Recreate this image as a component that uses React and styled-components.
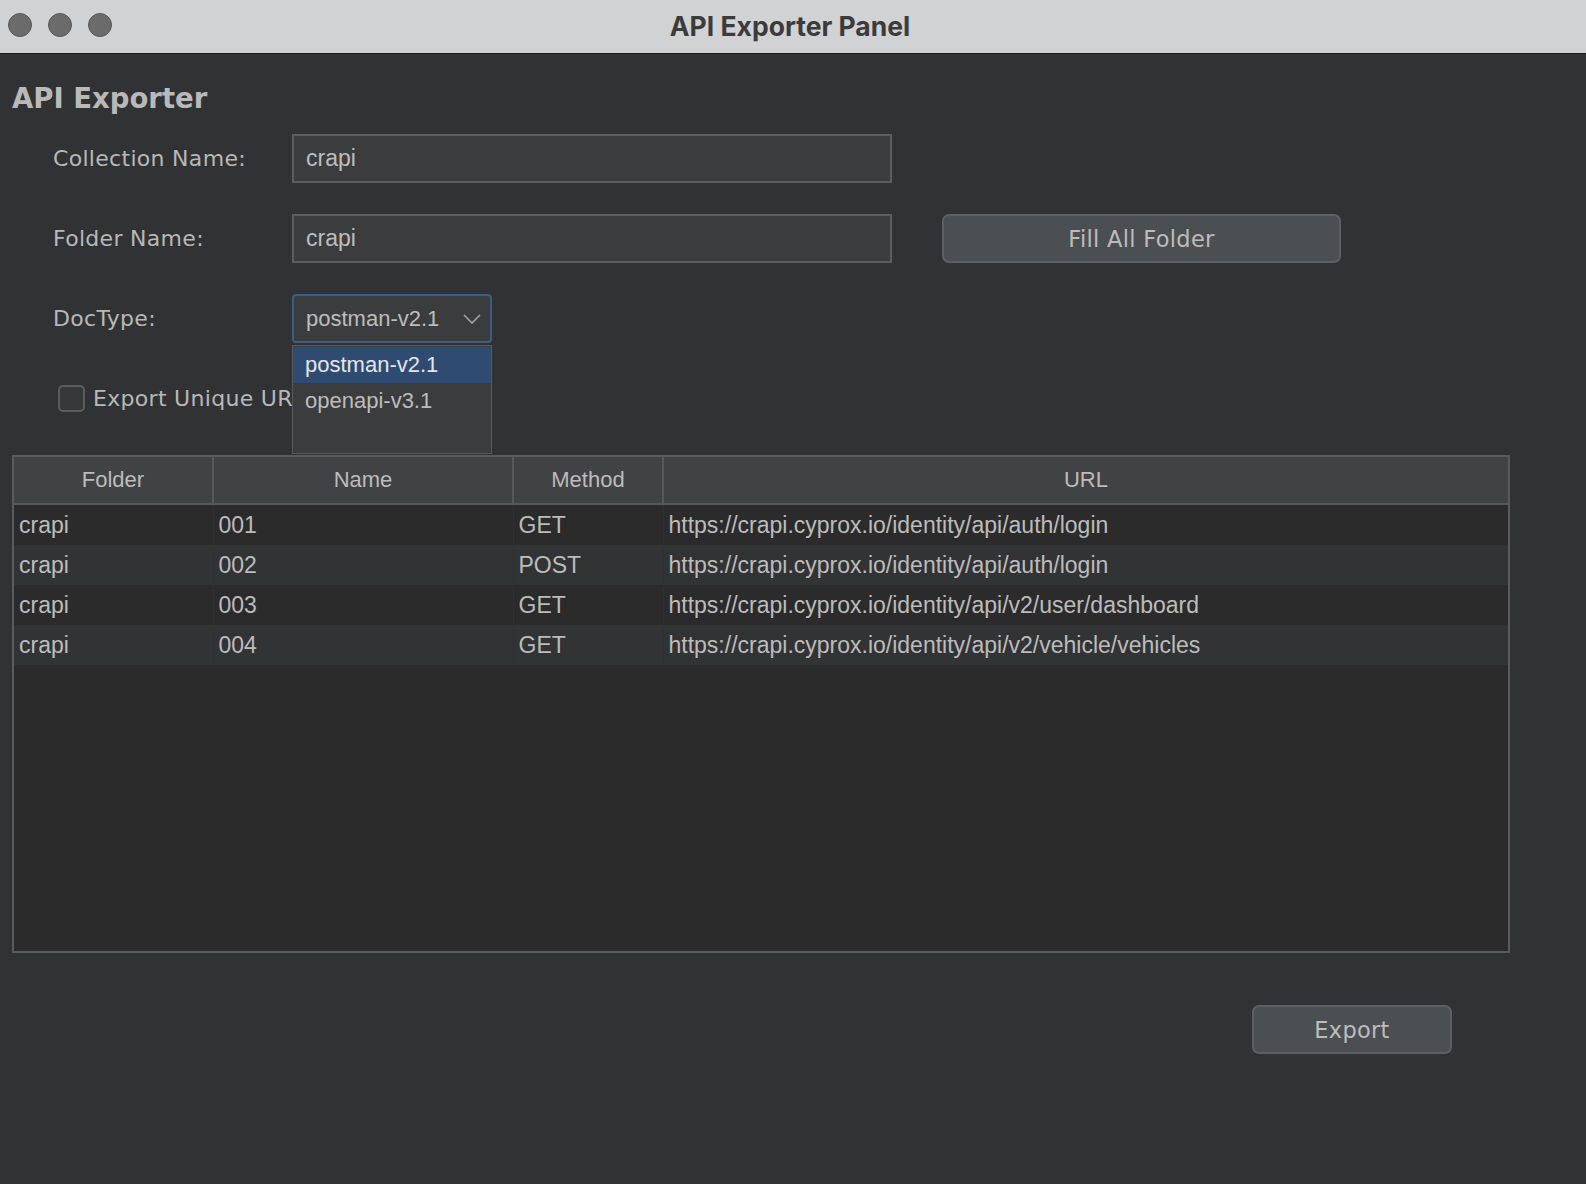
import React from 'react';
import styled, {createGlobalStyle} from 'styled-components';

const GlobalStyle = createGlobalStyle`
  html, body {
    margin: 0;
    padding: 0;
    background: #313234;
  }
  body {
    font-family: "DejaVu Sans", sans-serif;
  }
`;

const rows = [
    {folder: 'crapi', name: '001', method: 'GET', url: 'https://crapi.cyprox.io/identity/api/auth/login'},
    {folder: 'crapi', name: '002', method: 'POST', url: 'https://crapi.cyprox.io/identity/api/auth/login'},
    {folder: 'crapi', name: '003', method: 'GET', url: 'https://crapi.cyprox.io/identity/api/v2/user/dashboard'},
    {folder: 'crapi', name: '004', method: 'GET', url: 'https://crapi.cyprox.io/identity/api/v2/vehicle/vehicles'},
];

const columns = [
    {key: 'folder', label: 'Folder', width: 199},
    {key: 'name', label: 'Name', width: 300},
    {key: 'method', label: 'Method', width: 150},
    {key: 'url', label: 'URL'},
];

function App() {
    return (
        <Window>
            <GlobalStyle/>
            <TitleBar>
                <Lights>
                    <Light/>
                    <Light/>
                    <Light/>
                </Lights>
                <WindowTitle>API Exporter Panel</WindowTitle>
            </TitleBar>
            <Content>
                <Heading>API Exporter</Heading>
                <Form>
                    <Label>Collection Name:</Label>
                    <TextField>crapi</TextField>
                    <Spacer/>
                    <Spacer/>

                    <Label>Folder Name:</Label>
                    <TextField>crapi</TextField>
                    <Spacer/>
                    <Button>Fill All Folder</Button>

                    <Label>DocType:</Label>
                    <SelectWrap>
                        <Select>
                            <span>postman-v2.1</span>
                            <svg width="18" height="10" viewBox="0 0 18 10" fill="none">
                                <path d="M1 1l8 8 8-8" stroke="#a3a3a3" strokeWidth="1.6"/>
                            </svg>
                        </Select>
                        <Popup>
                            <Option selected>postman-v2.1</Option>
                            <Option>openapi-v3.1</Option>
                        </Popup>
                    </SelectWrap>
                    <Spacer/>
                    <Spacer/>

                    <CheckRow>
                        <Checkbox/>
                        <CheckLabel>Export Unique URL</CheckLabel>
                    </CheckRow>
                </Form>

                <TableBox>
                    <Table>
                        <colgroup>
                            {columns.map(c => <col key={c.key} style={c.width ? {width: c.width} : undefined}/>)}
                        </colgroup>
                        <thead>
                        <tr>
                            {columns.map(c => <Th key={c.key}>{c.label}</Th>)}
                        </tr>
                        </thead>
                        <tbody>
                        {rows.map((r, i) => (
                            <Tr key={i} odd={i % 2 === 1}>
                                {columns.map(c => <Td key={c.key}>{r[c.key]}</Td>)}
                            </Tr>
                        ))}
                        </tbody>
                    </Table>
                </TableBox>

                <Footer>
                    <Button wide>Export</Button>
                </Footer>
            </Content>
        </Window>
    )
}

const Window = styled.div`
  min-height: 1184px;
  display: flex;
  flex-direction: column;
  background: #313234;
`;
const TitleBar = styled.div`
  height: 53px;
  background: #d1d2d4;
  border-bottom: 1px solid #1c1c1d;
  display: flex;
  align-items: center;
  justify-content: center;
  position: relative;
`;
const Lights = styled.div`
  position: absolute;
  left: 8px;
  top: 13px;
  display: flex;
  gap: 16px;
`;
const Light = styled.div`
  width: 22px;
  height: 22px;
  border-radius: 50%;
  background: #6b6b6b;
  border: 1px solid #5a5a5a;
`;
const WindowTitle = styled.div`
  font-family: Inter, "Liberation Sans", sans-serif;
  font-weight: 700;
  font-size: 26.5px;
  color: #3b3b3b;
  margin-left: -6px;
  margin-top: -2px;
`;
const Content = styled.div`
  padding: 28px 0 0 12px;
  display: flex;
  flex-direction: column;
`;
const Heading = styled.h1`
  margin: 0;
  font-size: 27.5px;
  line-height: 32px;
  font-weight: 700;
  color: #b9b9b9;
`;
const Form = styled.div`
  margin: 20px 0 0 41px;
  display: grid;
  grid-template-columns: 239px 600px 50px 399px;
  grid-auto-rows: 49px;
  row-gap: 31px;
  align-items: center;
`;
const Label = styled.div`
  font-size: 22px;
  color: #b8b8b8;
  letter-spacing: 0.3px;
`;
const Spacer = styled.div``;
const TextField = styled.div`
  box-sizing: border-box;
  height: 49px;
  background: #3b3c3e;
  border: 2px solid #5d5e60;
  display: flex;
  align-items: center;
  padding-left: 12px;
  font-family: "Liberation Sans", Arial, sans-serif;
  font-size: 23px;
  color: #bdbdbd;
`;
const Button = styled.div`
  box-sizing: border-box;
  height: 49px;
  width: ${p => p.wide ? '200px' : 'auto'};
  background: #4c4f52;
  border: 2px solid #5d5f62;
  border-radius: 7px;
  display: flex;
  align-items: center;
  justify-content: center;
  font-size: 22.5px;
  color: #bcbcbc;
  letter-spacing: 0.3px;
`;
const SelectWrap = styled.div`
  position: relative;
  width: 200px;
  height: 49px;
`;
const Select = styled.div`
  box-sizing: border-box;
  height: 49px;
  background: #3b3c3e;
  border: 2px solid #3c5c86;
  border-radius: 4px;
  display: flex;
  align-items: center;
  justify-content: space-between;
  padding: 0 9px 0 12px;
  font-family: "Liberation Sans", Arial, sans-serif;
  font-size: 22px;
  color: #bdbdbd;
`;
const Popup = styled.div`
  position: absolute;
  left: 0;
  top: 51px;
  width: 200px;
  height: 109px;
  box-sizing: border-box;
  background: #3b3c3e;
  border: 1px solid #59595b;
  padding-top: 1px;
  z-index: 2;
`;
const Option = styled.div`
  height: 36px;
  display: flex;
  align-items: center;
  padding-left: 12px;
  font-family: "Liberation Sans", Arial, sans-serif;
  font-size: 22px;
  background: ${p => p.selected ? '#2f4b71' : 'transparent'};
  color: ${p => p.selected ? '#e6e6e6' : '#bdbdbd'};
`;
const CheckRow = styled.div`
  grid-column: 1 / span 2;
  display: flex;
  align-items: center;
  gap: 8px;
  padding-left: 5px;
`;
const Checkbox = styled.div`
  box-sizing: border-box;
  width: 27px;
  height: 27px;
  border: 2px solid #5c5d5f;
  border-radius: 5px;
  background: #37383a;
`;
const CheckLabel = styled.div`
  font-size: 22px;
  color: #b8b8b8;
  letter-spacing: 0.3px;
`;
const TableBox = styled.div`
  margin-top: 32px;
  width: 1498px;
  height: 498px;
  box-sizing: border-box;
  border: 2px solid #5b5b5d;
  background: #2b2b2b;
  overflow: hidden;
`;
const Table = styled.table`
  width: 100%;
  border-collapse: collapse;
  table-layout: fixed;
  font-family: "Liberation Sans", Arial, sans-serif;
  font-size: 22px;
  color: #bcbcbc;
`;
const Th = styled.th`
  height: 46px;
  padding: 0;
  background: #414244;
  font-weight: 400;
  text-align: center;
  border-right: 2px solid #575859;
  border-bottom: 2px solid #575859;
  &:last-child {
    border-right: none;
  }
`;
const Tr = styled.tr`
  background: ${p => p.odd ? '#323335' : '#2b2b2b'};
`;
const Td = styled.td`
  height: 40px;
  padding: 0 0 0 5px;
  font-size: 23px;
  white-space: nowrap;
  overflow: hidden;
  border-left: 1px solid #2f3031;
  &:first-child {
    border-left: none;
  }
`;
const Footer = styled.div`
  margin-top: 52px;
  display: flex;
  justify-content: flex-end;
  padding-right: 134px;
`;

export default App;
